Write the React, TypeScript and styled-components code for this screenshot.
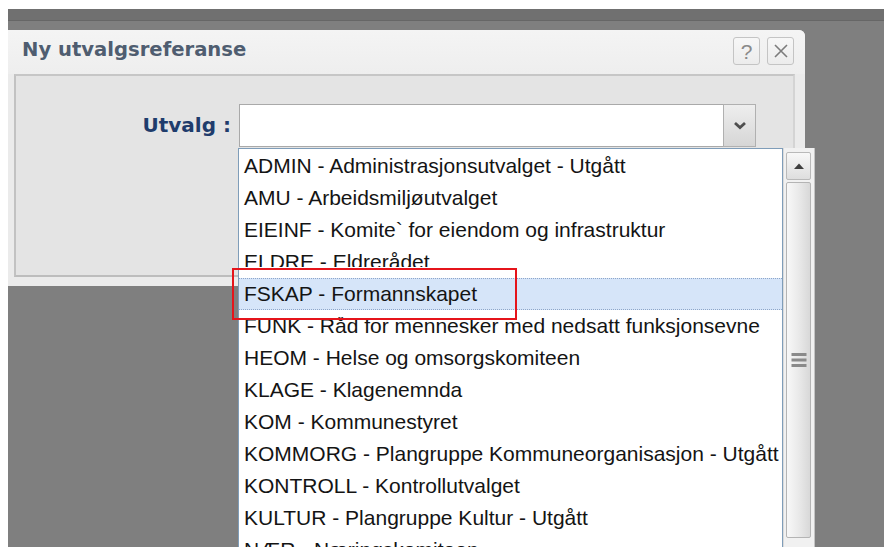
import React from "react";
import styled, { createGlobalStyle } from "styled-components";

const GlobalStyle = createGlobalStyle`
  html, body { overflow: hidden; }
  body { margin: 9px 0 0 8px; background: #ffffff; }
  *, *::before, *::after { box-sizing: border-box; }
`;

const Page = styled.div`
  position: relative;
  width: 876px;
  height: 538px;
  background: #7f7f7f;
  overflow: hidden;
  font-family: "Liberation Sans", Arial, sans-serif;
`;

const TopBar = styled.div`
  height: 12px;
  background: #707070;
  border-bottom: 1px solid #666666;
`;

const Dialog = styled.section`
  margin-top: 9px;
  width: 797px;
  height: 256px;
  background: #ebebeb;
  border-top-right-radius: 6px;
  display: flex;
  flex-direction: column;
`;

const Header = styled.header`
  height: 44px;
  flex: none;
  display: flex;
  justify-content: space-between;
  align-items: flex-start;
  padding: 0 11px 0 14px;
  background: linear-gradient(#f4f4f4, #eeeeee);
  border-top-right-radius: 6px;
`;

const Title = styled.h1`
  margin: 9px 0 0;
  font: bold 19.6px/22px "DejaVu Sans", Verdana, sans-serif;
  color: #4f5d70;
`;

const HeaderTools = styled.div`
  display: flex;
  gap: 7px;
  margin-top: 7px;
`;

const ToolButton = styled.button`
  width: 27px;
  height: 28px;
  padding: 0;
  display: flex;
  align-items: center;
  justify-content: center;
  background: linear-gradient(#f7f7f7, #ececec);
  border: 1px solid #c4c4c4;
  border-radius: 3px;
  color: #8a8a8a;
  font: 21px/1 "Liberation Sans", Arial, sans-serif;
`;

const Panel = styled.div`
  margin: 0 10px 0 6px;
  height: 203px;
  flex: none;
  background: #e4e4e4;
  border: 2px solid;
  border-color: #c6c6c6 #d4d4d4 #bdbdbd #c2c2c2;
  padding-top: 28px;
`;

const FieldRow = styled.div`
  display: grid;
  grid-template-columns: 223px 484px 33px;
  height: 43px;
`;

const FieldLabel = styled.label`
  padding-right: 8px;
  text-align: right;
  font: bold 20px/43px "DejaVu Sans", Verdana, sans-serif;
  color: #1f3c6c;
`;

const ComboInput = styled.div`
  background: #ffffff;
  border: 1px solid #a9a9a9;
  border-right: none;
`;

const ComboButton = styled.div`
  display: flex;
  align-items: center;
  justify-content: center;
  border: 1px solid #b0b0b0;
  background: linear-gradient(#eeeeee, #d6d6d6);
`;

const Dropdown = styled.div`
  position: absolute;
  left: 230px;
  top: 139px;
  width: 577px;
  height: 410px;
  display: flex;
`;

const ListBox = styled.ul`
  flex: 1;
  margin: 0;
  padding: 1px 0 0;
  list-style: none;
  background: #ffffff;
  border: 1px solid #7f9db9;
  overflow: hidden;
`;

const Option = styled.li<{ $selected?: boolean }>`
  height: 32px;
  padding-left: 5px;
  font-size: 21px;
  line-height: 30px;
  white-space: nowrap;
  overflow: hidden;
  color: #141414;
  border-top: 1px dotted transparent;
  border-bottom: 1px dotted transparent;
  ${(p) =>
    p.$selected &&
    `
    position: relative;
    z-index: 1;
    overflow: visible;
    background: #d6e5f9;
    border-color: #8ea6c9;
    box-shadow: 0 -11px 0 #ffffff, 0 7px 0 #ffffff;
  `}
`;

const ScrollBar = styled.div`
  width: 32px;
  flex: none;
  display: flex;
  flex-direction: column;
  gap: 2px;
  padding: 4px 3px 0 2px;
  background: #f1f1f1;
  border-left: 1px solid #dadada;
  border-right: 1px solid #c4c4c4;
`;

const ScrollArrow = styled.div`
  height: 28px;
  flex: none;
  display: flex;
  align-items: center;
  justify-content: center;
  border: 1px solid #b9b9b9;
  border-radius: 2px;
  background: linear-gradient(#f8f8f8, #dedede);
`;

const ScrollThumb = styled.div`
  height: 356px;
  flex: none;
  display: flex;
  align-items: center;
  justify-content: center;
  border: 1px solid #b4b4b4;
  border-radius: 2px;
  background: linear-gradient(90deg, #f8f8f8, #e8e8e8 55%, #d8d8d8);
`;

const Callout = styled.div`
  position: absolute;
  z-index: 2;
  left: 224px;
  top: 259px;
  width: 285px;
  height: 52px;
  border: 2px solid #e5141b;
  pointer-events: none;
`;

const options = [
  "ADMIN - Administrasjonsutvalget - Utgått",
  "AMU - Arbeidsmiljøutvalget",
  "EIEINF - Komite` for eiendom og infrastruktur",
  "ELDRE - Eldrerådet",
  "FSKAP - Formannskapet",
  "FUNK - Råd for mennesker med nedsatt funksjonsevne",
  "HEOM - Helse og omsorgskomiteen",
  "KLAGE - Klagenemnda",
  "KOM - Kommunestyret",
  "KOMMORG - Plangruppe Kommuneorganisasjon - Utgått",
  "KONTROLL - Kontrollutvalget",
  "KULTUR - Plangruppe Kultur - Utgått",
  "NÆR - Næringskomiteen",
];

const selected = "FSKAP - Formannskapet";

export default function App() {
  return (
    <>
      <GlobalStyle />
      <Page>
        <TopBar />
        <Dialog>
          <Header>
            <Title>Ny utvalgsreferanse</Title>
            <HeaderTools>
              <ToolButton aria-label="Hjelp">?</ToolButton>
              <ToolButton aria-label="Lukk">
                <svg width="16" height="16" viewBox="0 0 16 16">
                  <path d="M2 2 L14 14 M14 2 L2 14" stroke="#7c7c7c" strokeWidth="1.6" fill="none" />
                </svg>
              </ToolButton>
            </HeaderTools>
          </Header>
          <Panel>
            <FieldRow>
              <FieldLabel>Utvalg :</FieldLabel>
              <ComboInput />
              <ComboButton>
                <svg width="14" height="9" viewBox="0 0 14 9">
                  <path d="M2 2 L7 6.5 L12 2" stroke="#4e4e4e" strokeWidth="2.8" fill="none" />
                </svg>
              </ComboButton>
            </FieldRow>
          </Panel>
        </Dialog>

        <Dropdown>
          <ListBox>
            {options.map((o) => (
              <Option key={o} $selected={o === selected}>
                {o}
              </Option>
            ))}
          </ListBox>
          <ScrollBar>
            <ScrollArrow>
              <svg width="12" height="8" viewBox="0 0 12 8">
                <path d="M1 7 L6 1.5 L11 7 Z" fill="#3f3f3f" />
              </svg>
            </ScrollArrow>
            <ScrollThumb>
              <svg width="16" height="16" viewBox="0 0 16 16">
                <rect x="0.5" y="1" width="15" height="3" fill="#8a8a8a" />
                <rect x="0.5" y="6.5" width="15" height="3" fill="#8a8a8a" />
                <rect x="0.5" y="12" width="15" height="3" fill="#8a8a8a" />
              </svg>
            </ScrollThumb>
          </ScrollBar>
        </Dropdown>

        <Callout />
      </Page>
    </>
  );
}
